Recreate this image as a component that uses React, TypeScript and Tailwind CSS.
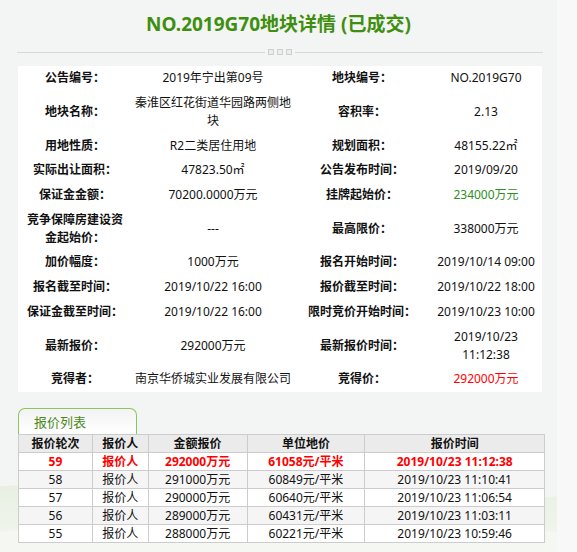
import React from 'react';

type Cell = { text: string; cls?: string };
type InfoRow = [string, Cell, string, Cell];

const FONT = { fontFamily: '"Noto Sans", "Noto Sans CJK SC", sans-serif' };

const info: InfoRow[] = [
  ['公告编号：', { text: '2019年宁出第09号' }, '地块编号：', { text: 'NO.2019G70' }],
  ['地块名称：', { text: '秦淮区红花街道华园路两侧地块' }, '容积率：', { text: '2.13' }],
  ['用地性质：', { text: 'R2二类居住用地' }, '规划面积：', { text: '48155.22㎡' }],
  ['实际出让面积：', { text: '47823.50㎡' }, '公告发布时间：', { text: '2019/09/20' }],
  ['保证金金额：', { text: '70200.0000万元' }, '挂牌起始价：', { text: '234000万元', cls: 'text-[#2f8f1f]' }],
  ['竞争保障房建设资金起始价：', { text: '---' }, '最高限价：', { text: '338000万元' }],
  ['加价幅度：', { text: '1000万元' }, '报名开始时间：', { text: '2019/10/14 09:00' }],
  ['报名截至时间：', { text: '2019/10/22 16:00' }, '报价截至时间：', { text: '2019/10/22 18:00' }],
  ['保证金截至时间：', { text: '2019/10/22 16:00' }, '限时竞价开始时间：', { text: '2019/10/23 10:00' }],
  ['最新报价：', { text: '292000万元' }, '最新报价时间：', { text: '2019/10/23 11:12:38' }],
  ['竞得者：', { text: '南京华侨城实业发展有限公司' }, '竞得价：', { text: '292000万元', cls: 'text-[#ff0000]' }],
];

const bids = [
  ['59', '报价人', '292000万元', '61058元/平米', '2019/10/23 11:12:38'],
  ['58', '报价人', '291000万元', '60849元/平米', '2019/10/23 11:10:41'],
  ['57', '报价人', '290000万元', '60640元/平米', '2019/10/23 11:06:54'],
  ['56', '报价人', '289000万元', '60431元/平米', '2019/10/23 11:03:11'],
  ['55', '报价人', '288000万元', '60221元/平米', '2019/10/23 10:59:46'],
];

const headers = ['报价轮次', '报价人', '金额报价', '单位地价', '报价时间'];
const widths = ['w-[74px]', 'w-[56px]', 'w-[99px]', 'w-[118px]', 'w-[180px]'];

// pale green hills behind the bottom of the page
function Hills() {
  return (
    <svg className="absolute left-0 bottom-0 z-0" width="577" height="70" viewBox="0 0 577 70">
      <defs>
        <linearGradient id="hg" x1="0" y1="0" x2="0" y2="1">
          <stop offset="0" stopColor="#e8f0e2" />
          <stop offset="1" stopColor="#f3f6f1" />
        </linearGradient>
      </defs>
      <path d="M0 4 C 40 0, 90 16, 150 30 C 260 55, 420 30, 577 12 L577 70 L0 70 Z" fill="url(#hg)" />
      <path d="M0 50 C 120 34, 260 60, 400 50 C 480 44, 540 48, 577 52 L577 70 L0 70 Z" fill="#f5f7f3" />
    </svg>
  );
}

export default function App() {
  return (
    <div className="flex w-[577px] h-[552px] bg-[#f8f8f8] text-[#111]" style={FONT}>
      <div className="relative w-[557px] h-full bg-[#f3f5f5] overflow-hidden">
        <Hills />
        <div className="relative z-10 flex flex-col">
          {/* Title */}
          <h1 className="pt-[12px] text-center text-[19px] leading-[24px] font-bold text-[#3f8f0f]">
            NO.2019G70地块详情 (已成交)
          </h1>

          {/* Divider */}
          <div className="mt-[12px] ml-[17px] w-[526px] h-[8px] flex items-center">
            <div className="flex-1 h-px bg-[#d6d8d8]" />
            <div className="flex gap-[3px] px-[3px]">
              <span className="w-[6px] h-[6px] border border-[#cfcfcf] bg-[#ececec]" />
              <span className="w-[6px] h-[6px] border border-[#cfcfcf] bg-[#ececec]" />
              <span className="w-[6px] h-[6px] border border-[#cfcfcf] bg-[#ececec]" />
            </div>
            <div className="flex-1 h-px bg-[#d6d8d8]" />
          </div>

          {/* Info panel */}
          <div className="mt-[10px] ml-[18px] w-[524px] bg-white grid grid-cols-[114px_162px_136px_112px] text-[12px] leading-[18px] text-center">
            {info.map(([l1, v1, l2, v2], i) => (
              <React.Fragment key={i}>
                <div className="px-[5px] py-[3.35px] font-bold flex items-center justify-center">{l1}</div>
                <div className={`px-[2px] py-[3.35px] flex items-center justify-center ${v1.cls ?? ''}`}>{v1.text}</div>
                <div className="px-[4px] py-[3.35px] font-bold flex items-center justify-center">{l2}</div>
                <div className={`px-0 py-[3.35px] flex items-center justify-center ${v2.cls ?? ''}`}>{v2.text}</div>
              </React.Fragment>
            ))}
          </div>

          {/* Tab */}
          <div className="mt-[16px] ml-[18px] w-[119px] h-[26px] rounded-t-[7px] border border-b-0 border-[#8fc45a] bg-gradient-to-b from-[#f3f3f3] to-white pl-[15px] text-[13px] leading-[26px] text-[#4a8a1a]">
            报价列表
          </div>

          {/* Bid table */}
          <table className="ml-[18px] w-[527px] border-collapse text-[12px] text-center bg-white">
            <thead>
              <tr className="bg-[#ebebeb]">
                {headers.map((h, i) => (
                  <th key={h} className={`${widths[i]} h-[18px] p-0 leading-[15px] border border-[#cccccc] font-bold`}>
                    {h}
                  </th>
                ))}
              </tr>
            </thead>
            <tbody>
              {bids.map((row, r) => (
                <tr
                  key={row[0]}
                  className={`${r % 2 === 1 ? 'bg-[#f5f5f5]' : 'bg-white'} ${r === 0 ? 'text-[#ff0000] font-bold' : ''}`}
                >
                  {row.map((c, i) => (
                    <td key={i} className="h-[18px] p-0 leading-[15px] border border-[#cccccc]">
                      {c}
                    </td>
                  ))}
                </tr>
              ))}
            </tbody>
          </table>
        </div>
      </div>
      <div className="flex-1" />
    </div>
  );
}
